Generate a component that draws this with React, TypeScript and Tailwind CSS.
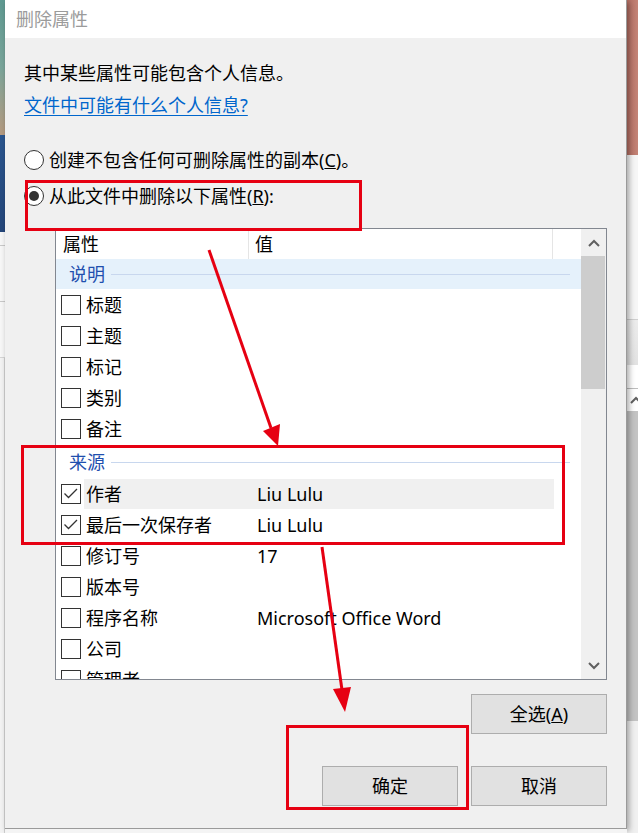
import React from "react";

type Row =
  | { kind: "group"; label: string; tinted?: boolean }
  | { kind: "item"; label: string; value?: string; checked?: boolean; active?: boolean };

const rows: Row[] = [
  { kind: "group", label: "说明", tinted: true },
  { kind: "item", label: "标题" },
  { kind: "item", label: "主题" },
  { kind: "item", label: "标记" },
  { kind: "item", label: "类别" },
  { kind: "item", label: "备注" },
  { kind: "group", label: "来源" },
  { kind: "item", label: "作者", value: "Liu Lulu", checked: true, active: true },
  { kind: "item", label: "最后一次保存者", value: "Liu Lulu", checked: true },
  { kind: "item", label: "修订号", value: "17" },
  { kind: "item", label: "版本号" },
  { kind: "item", label: "程序名称", value: "Microsoft Office Word" },
  { kind: "item", label: "公司" },
  { kind: "item", label: "管理者" },
];

function Checkbox({ checked }: { checked?: boolean }) {
  return (
    <div className="w-[20px] h-[20px] border border-[#333333] bg-white shrink-0">
      {checked && (
        <svg width="18" height="18" viewBox="0 0 18 18" className="block">
          <path d="M2.5 8.5 L6.5 12.5 L15 4" fill="none" stroke="#333333" strokeWidth="1.3" />
        </svg>
      )}
    </div>
  );
}

function Radio({ checked }: { checked?: boolean }) {
  return (
    <div className="w-[20px] h-[20px] rounded-full border border-[#333333] bg-white flex items-center justify-center shrink-0">
      {checked && <div className="w-[10px] h-[10px] rounded-full bg-[#333333]" />}
    </div>
  );
}

function Chevron({ up }: { up?: boolean }) {
  return (
    <svg width="12" height="8" viewBox="0 0 12 8">
      <polyline
        points={up ? "1,7 6,2 11,7" : "1,1 6,6 11,1"}
        fill="none"
        stroke="#606060"
        strokeWidth="2"
      />
    </svg>
  );
}

function ListRow({ row }: { row: Row }) {
  if (row.kind === "group") {
    return (
      <div
        className={`flex items-center shrink-0 pl-[13px] pr-[11px] ${
          row.tinted ? "h-[30px] bg-[#e5f1fb]" : "h-[34px] pt-[2px]"
        }`}
      >
        <span className="text-[#1f4fae] leading-[24px]">{row.label}</span>
        <div className="flex-1 h-px bg-[#c8d7ee] ml-[6px]" />
      </div>
    );
  }
  return (
    <div className="flex items-center h-[31px] shrink-0">
      <div className="w-[28px] pl-[5px] flex items-center">
        <Checkbox checked={row.checked} />
      </div>
      <div className={`flex items-center w-[470px] h-[30px] ${row.active ? "bg-[#f0f0f0]" : ""}`}>
        <span className="w-[171px] pl-[2px] leading-[24px] whitespace-nowrap">{row.label}</span>
        <span className="pl-[2px] leading-[24px] whitespace-nowrap">{row.value}</span>
      </div>
    </div>
  );
}

function Button({ label }: { label: React.ReactNode }) {
  return (
    <button className="w-[136px] h-[40px] bg-[#e1e1e1] border border-[#adadad] flex items-center justify-center leading-[24px] text-black">
      {label}
    </button>
  );
}

export default function App() {
  return (
    <div className="w-[638px] h-[833px] overflow-hidden relative flex bg-[#f0f0f0] font-['Noto_Sans','Noto_Sans_CJK_SC',sans-serif] text-[18px] text-black">
      {/* desktop behind, left */}
      <div className="w-[5px] flex flex-col shrink-0">
        <div className="h-[135px] bg-gradient-to-b from-[#5f9a92] via-[#7aa59a] to-[#b59a80]" />
        <div className="h-[97px] bg-gradient-to-b from-[#2b568f] to-[#24467a]" />
        <div className="h-[14px] bg-[#f7f7f7] border-b border-[#c9c9c9]" />
        <div className="h-[56px] bg-[#f7f7f7] border-b border-[#c9c9c9]" />
        <div className="h-[56px] bg-[#f7f7f7] border-b border-[#d5d5d5]" />
        <div className="flex-1 bg-[#f3f3f3] border-r border-[#d0d0d0]" />
      </div>

      {/* dialog */}
      <div className="w-[622px] flex flex-col shrink-0 relative z-10">
        <div className="h-[829px] flex flex-col border-r border-b border-[#9a9a9a] shadow-[2px_2px_6px_rgba(0,0,0,0.35)]">
          <div className="h-[38px] bg-white flex items-center pl-[11px] text-[#9b9b9b] shrink-0">
            删除属性
          </div>
          <div className="flex-1 bg-[#f0f0f0] pl-[19px] pt-[23px] flex flex-col">
            <p className="leading-[24px]">其中某些属性可能包含个人信息。</p>
            <a className="mt-[8px] leading-[24px] text-[#0066cc] underline underline-offset-[3px] self-start cursor-pointer">
              文件中可能有什么个人信息?
            </a>

            <div className="mt-[31px] h-[24px] flex items-center gap-[5px]">
              <Radio />
              <span className="leading-[24px]">
                创建不包含任何可删除属性的副本(<span className="underline">C</span>)。
              </span>
            </div>
            <div className="mt-[12px] h-[24px] flex items-center gap-[5px]">
              <Radio checked />
              <span className="leading-[24px]">
                从此文件中删除以下属性(<span className="underline">R</span>):
              </span>
            </div>

            {/* property list */}
            <div className="mt-[20px] ml-[31px] w-[552px] h-[452px] border border-[#828790] flex">
              <div className="flex-1 bg-white flex flex-col overflow-hidden">
                <div className="h-[30px] flex shrink-0">
                  <div className="w-[193px] pl-[7px] flex items-center border-r border-[#e5e5e5]">属性</div>
                  <div className="w-[304px] pl-[6px] flex items-center border-r border-[#e5e5e5]">值</div>
                </div>
                {rows.map((r, i) => (
                  <ListRow key={i} row={r} />
                ))}
              </div>
              <div className="w-[25px] bg-[#f0f0f0] flex flex-col">
                <div className="h-[27px] flex items-center justify-center">
                  <Chevron up />
                </div>
                <div className="h-[133px] w-[24px] bg-[#cdcdcd]" />
                <div className="flex-1" />
                <div className="h-[27px] flex items-center justify-center">
                  <Chevron />
                </div>
              </div>
            </div>

            <div className="w-[583px] flex justify-end mt-[14px]">
              <Button label={<span>全选(<span className="underline">A</span>)</span>} />
            </div>
            <div className="w-[583px] flex justify-end gap-[13px] mt-[32px]">
              <Button label="确定" />
              <Button label="取消" />
            </div>
          </div>
        </div>
        <div className="flex-1 bg-[#f4f4f4]" />
      </div>

      {/* desktop behind, right */}
      <div className="flex-1 flex flex-col">
        <div className="h-[155px] bg-gradient-to-r from-[#b46f63] to-[#c98a7d]" />
        <div className="h-[165px] bg-[#f6f6f6] border-b border-[#cfcfcf]" />
        <div className="h-[45px] bg-gradient-to-b from-[#ececec] to-[#e2e2e2]" />
        <div className="h-[24px] bg-white border-b border-[#bdbdbd]" />
        <div className="h-[22px] bg-white flex items-center pl-[3px]">
          <Chevron up />
        </div>
        <div className="h-[310px] bg-[#c3c3c3]" />
        <div className="flex-1 bg-[#f0f0f0]" />
      </div>

      {/* annotations */}
      <div className="absolute left-[25px] top-[180px] w-[337px] h-[51px] border-[3px] border-[#e60012] z-20" />
      <div className="absolute left-[21px] top-[445px] w-[544px] h-[100px] border-[3px] border-[#e60012] z-20" />
      <div className="absolute left-[286px] top-[725px] w-[183px] h-[85px] border-[3px] border-[#e60012] z-20" />
      <svg className="absolute inset-0 z-20 pointer-events-none" width="638" height="833">
        <line x1="209" y1="250" x2="271" y2="428" stroke="#e60012" strokeWidth="3" />
        <polygon points="263,431 280,424 278,446" fill="#e60012" />
        <line x1="322" y1="547" x2="342" y2="690" stroke="#e60012" strokeWidth="3" />
        <polygon points="333,689 351,687 345,712" fill="#e60012" />
      </svg>
    </div>
  );
}
